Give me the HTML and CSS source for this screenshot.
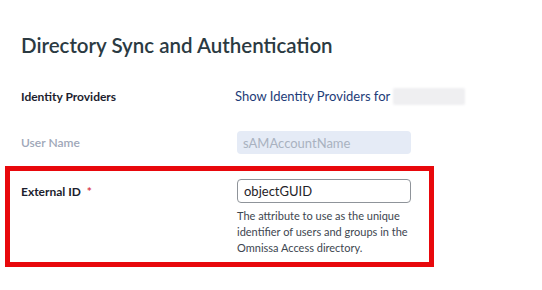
FILE: index.html
```html
<!DOCTYPE html>
<html>
<head>
<meta charset="utf-8">
<link rel="stylesheet" href="styles.css">
</head>
<body>
<div class="page">
  <h1 class="title">Directory Sync and Authentication</h1>
  <div class="row row-idp">
    <div class="label">Identity Providers</div>
    <div class="control">
      <a class="link">Show Identity Providers for</a>
      <span class="blur"></span>
    </div>
  </div>
  <div class="row row-user">
    <div class="label muted">User Name</div>
    <div class="control">
      <div class="input disabled">sAMAccountName</div>
    </div>
  </div>
  <div class="highlight">
    <div class="row row-ext">
      <div class="label">External ID <span class="req">*</span></div>
      <div class="control stack">
        <div class="input">objectGUID</div>
        <p class="help">The attribute to use as the unique identifier of users and groups in the Omnissa Access directory.</p>
      </div>
    </div>
  </div>
</div>
</body>
</html>
```
FILE: styles.css
```css
html, body {
  margin: 0;
  padding: 0;
  background: #ffffff;
}
body {
  font-family: "Lato", "Noto Sans", sans-serif;
  width: 542px;
  height: 290px;
  overflow: hidden;
}
.title {
  margin: 0;
  padding: 32px 0 0 21px;
  font-size: 20.5px;
  font-weight: 600;
  color: #2b3a42;
  line-height: 26px;
}
.row {
  display: grid;
  grid-template-columns: 216px auto;
  align-items: center;
  padding-left: 21px;
}
.row-idp {
  margin-top: 29px;
  height: 18px;
}
.row-user {
  margin-top: 26px;
}
.label {
  font-size: 12px;
  font-weight: 700;
  color: #1c1d2e;
}
.label.muted {
  color: #9ea7b8;
  font-weight: 600;
}
.control {
  display: flex;
  align-items: center;
}
.control.stack {
  flex-direction: column;
  align-items: flex-start;
}
.link {
  font-size: 13px;
  color: #1d3c78;
  white-space: nowrap;
  margin-left: -2px;
}
.blur {
  display: inline-block;
  flex: none;
  width: 72px;
  height: 17px;
  margin-left: 3px;
  background: #efeff1;
  border-radius: 2px;
  filter: blur(1px);
}
.input {
  box-sizing: border-box;
  height: 24px;
  width: 174px;
  border-radius: 4px;
  padding: 0 6px;
  display: flex;
  align-items: center;
  font-size: 13px;
  color: #1f2328;
  border: 1px solid #8f949a;
}
.input.disabled {
  border: none;
  height: 23px;
  background: #e5ebf6;
  color: #a9b2c0;
}
.highlight {
  margin: 12px 0 0 5px;
  width: 429px;
  box-sizing: border-box;
  border: 5px solid #e8080c;
  padding: 8px 0 6px;
}
.row-ext {
  padding-left: 11px;
  align-items: start;
}
.row-ext .label {
  padding-top: 5px;
}
.req {
  color: #d93a4a;
  margin-left: 3px;
}
.help {
  margin: 5px 0 0;
  width: 180px;
  font-size: 11px;
  line-height: 16px;
  color: #3d4650;
}
```
